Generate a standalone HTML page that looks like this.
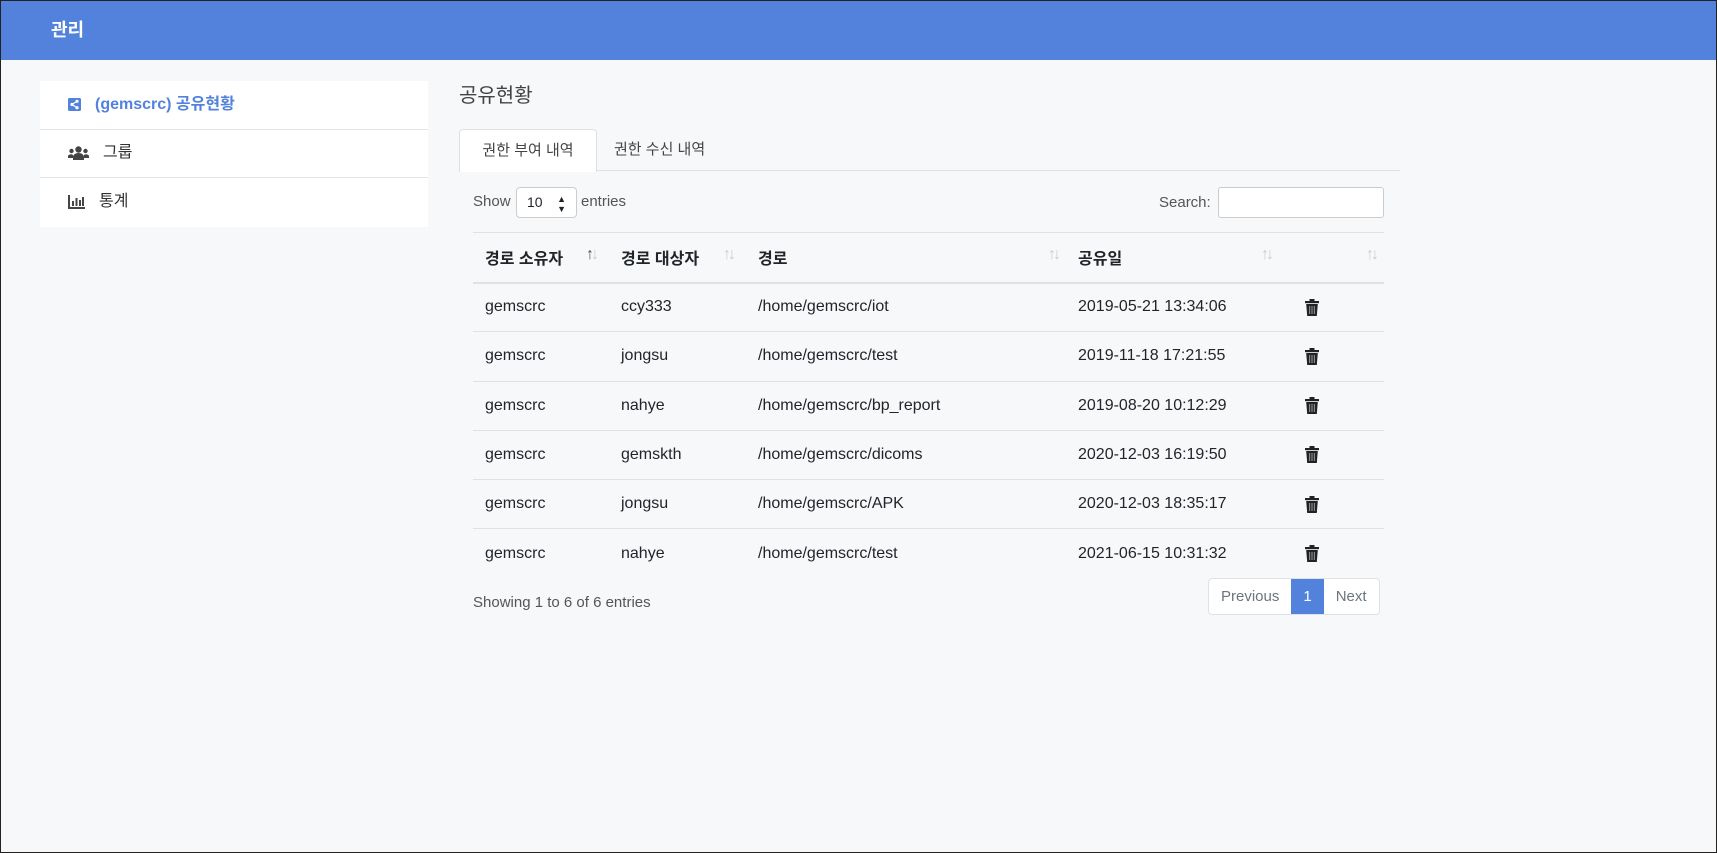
<!DOCTYPE html>
<html><head><meta charset="utf-8"><style>
*{box-sizing:border-box;margin:0;padding:0}
html,body{width:1717px;height:853px;overflow:hidden}
body{background:#f7f8fa;font-family:"Liberation Sans","Noto Sans CJK KR",sans-serif;font-size:15px;color:#212529;position:relative;border:1px solid #222}
.hdr{position:absolute;left:0;top:0;width:1715px;height:59px;background:#5282dc;color:#fff;font-weight:bold;font-size:18px;line-height:59px;padding-left:50px}
.side{position:absolute;left:39px;top:80px;width:388px;background:#fff}
.side div{height:48.5px;line-height:48px;border-bottom:1.5px solid #e3e5e8;padding-left:28px;font-size:16px;color:#333;display:flex;align-items:center}
.side div:last-child{border-bottom:none}
.side .act{color:#5282dc;font-weight:bold}
.side svg{margin-right:14px}
.abs{position:absolute}
.title{left:458px;top:78px;font-size:20px;color:#444}
.tabs{left:458px;top:128px;width:941px;height:42px;border-bottom:1px solid #dee2e6}
.tab1{position:absolute;left:0;top:0;width:138px;height:43px;background:#fff;border:1px solid #dee2e6;border-bottom:none;border-radius:4px 4px 0 0;text-align:center;line-height:42px;color:#444}
.tab2{position:absolute;left:155px;top:0;line-height:42px;color:#444}
.lbl{color:#555}
.sel{left:515px;top:186px;width:61px;height:31px;border:1px solid #ccc;border-radius:4px;background:#fff;font-size:14px;line-height:29px;padding-left:10px}
.inp{left:1217px;top:186px;width:166px;height:31px;border:1px solid #ccc;border-radius:3px;background:#fff}
table{position:absolute;left:472px;top:231px;width:911px;border-collapse:collapse;border-top:1px solid #dee2e6}
th{height:50px;text-align:left;font-weight:bold;border-bottom:2px solid #dee2e6;padding-left:12px;position:relative;font-size:16px}
td{height:49.3px;border-bottom:1px solid #dee2e6;padding-left:12px;font-size:16px}
tr:last-child td{border-bottom:none}
.ar{position:absolute;top:13px;color:#ccc;font-size:16px;letter-spacing:-3px}
.ar b{color:#555;font-weight:normal}
.pg{left:1207px;top:577px;height:37px;display:flex;border:1px solid #dee2e6;border-radius:4px;background:#fff;color:#6c757d}
.pg span{line-height:35px;padding:0 12px}
.pg .on{background:#5282dc;color:#fff;padding:0 12px}
</style></head><body>
<div class="hdr">관리</div>
<div class="side">
<div class="act"><svg width="13" height="13" viewBox="0 0 13 13"><rect width="13" height="13" rx="1.5" fill="#5282dc"/><circle cx="9" cy="3.3" r="1.6" fill="#fff"/><circle cx="4" cy="6.5" r="1.6" fill="#fff"/><circle cx="9" cy="9.7" r="1.6" fill="#fff"/><path d="M9 3.3L4 6.5L9 9.7" stroke="#fff" stroke-width="1.2" fill="none"/></svg>(gemscrc) 공유현황</div>
<div><svg width="21" height="14" viewBox="0 0 21 14"><circle cx="10.5" cy="3.5" r="3.2" fill="#444"/><circle cx="3.5" cy="5" r="2.2" fill="#444"/><circle cx="17.5" cy="5" r="2.2" fill="#444"/><path d="M5 14v-3a5.5 4 0 0 1 11 0v3z" fill="#444"/><path d="M0 12v-2a3 2.5 0 0 1 5 -1v3z M21 12v-2a3 2.5 0 0 0 -5 -1v3z" fill="#444"/></svg>그룹</div>
<div><svg width="17" height="14" viewBox="0 0 17 14"><path d="M1 0v13h16" stroke="#444" stroke-width="2" fill="none"/><rect x="4" y="6" width="2" height="5" fill="#444"/><rect x="7.5" y="3" width="2" height="8" fill="#444"/><rect x="11" y="5" width="2" height="6" fill="#444"/><rect x="14" y="2" width="2" height="9" fill="#444"/></svg>통계</div>
</div>
<div class="abs title">공유현황</div>
<div class="abs tabs"><div class="tab1">권한 부여 내역</div><div class="tab2">권한 수신 내역</div></div>
<div class="abs lbl" style="left:472px;top:192px">Show</div>
<div class="abs sel">10<span style="position:absolute;right:10px;top:0;font-size:9px;line-height:10px;top:6px">▲<br>▼</span></div>
<div class="abs lbl" style="left:580px;top:192px">entries</div>
<div class="abs lbl" style="left:1158px;top:193px">Search:</div>
<div class="abs inp"></div>
<table>
<tr><th style="width:136px">경로 소유자<span class="ar" style="left:113px"><b>↑</b>↓</span></th><th style="width:137px">경로 대상자<span class="ar" style="left:114px">↑↓</span></th><th style="width:320px">경로<span class="ar" style="left:302px">↑↓</span></th><th style="width:218px">공유일<span class="ar" style="left:195px">↑↓</span></th><th>&nbsp;<span class="ar" style="left:82px">↑↓</span></th></tr>
<tr><td>gemscrc</td><td>ccy333</td><td>/home/gemscrc/iot</td><td>2019-05-21 13:34:06</td><td>TR</td></tr>
<tr><td>gemscrc</td><td>jongsu</td><td>/home/gemscrc/test</td><td>2019-11-18 17:21:55</td><td>TR</td></tr>
<tr><td>gemscrc</td><td>nahye</td><td>/home/gemscrc/bp_report</td><td>2019-08-20 10:12:29</td><td>TR</td></tr>
<tr><td>gemscrc</td><td>gemskth</td><td>/home/gemscrc/dicoms</td><td>2020-12-03 16:19:50</td><td>TR</td></tr>
<tr><td>gemscrc</td><td>jongsu</td><td>/home/gemscrc/APK</td><td>2020-12-03 18:35:17</td><td>TR</td></tr>
<tr><td>gemscrc</td><td>nahye</td><td>/home/gemscrc/test</td><td>2021-06-15 10:31:32</td><td>TR</td></tr>
</table>
<div class="abs lbl" style="left:472px;top:593px">Showing 1 to 6 of 6 entries</div>
<div class="abs pg"><span>Previous</span><span class="on">1</span><span>Next</span></div>
<script>
var svg='<svg width="14" height="17" viewBox="0 0 14 17" style="margin-left:9px;vertical-align:middle"><rect x="0" y="2" width="14" height="2.2" fill="#222"/><rect x="4.5" y="0" width="5" height="2.5" fill="#222"/><path d="M1.2 5h11.6l-1 12h-9.6z" fill="#222"/><rect x="4" y="7" width="1.2" height="8" fill="#888"/><rect x="6.4" y="7" width="1.2" height="8" fill="#888"/><rect x="8.8" y="7" width="1.2" height="8" fill="#888"/></svg>';
document.querySelectorAll('td').forEach(function(t){if(t.textContent==='TR')t.innerHTML=svg;});
</script>
</body></html>
